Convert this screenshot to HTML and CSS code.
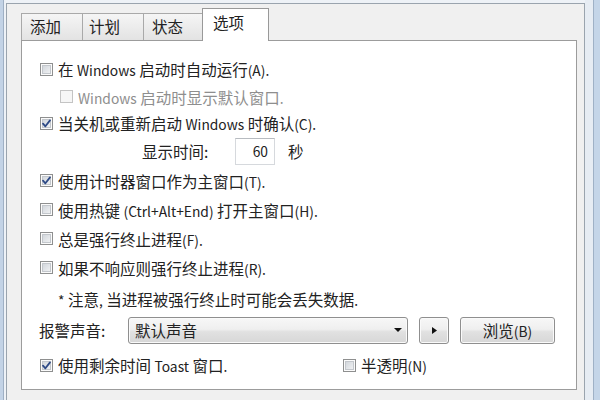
FILE: index.html
```html
<!DOCTYPE html>
<html lang="zh-CN">
<head>
<meta charset="utf-8">
<title>选项</title>
<link rel="stylesheet" href="styles.css">
</head>
<body>
<div class="screen">
  <div class="frame-left"></div>
  <div class="dialog">
    <div class="tabs">
      <div class="tab tab-1">添加</div>
      <div class="tab tab-2">计划</div>
      <div class="tab tab-3">状态</div>
      <div class="tab tab-active">选项</div>
    </div>
    <div class="panel">
      <div class="row r1"><span class="cb"></span><span>在 <span class="lat">Windows</span> 启动时自动运行<span class="lat">(A).</span></span></div>
      <div class="row r2 sub disabled"><span class="cb cb-disabled"></span><span><span class="lat">Windows</span> 启动时显示默认窗口<span class="lat">.</span></span></div>
      <div class="row r3"><span class="cb"><svg class="tick" viewBox="0 0 11 11"><path d="M2 5.6 L4.4 8.3 L9 2.4"/></svg></span><span>当关机或重新启动 <span class="lat">Windows</span> 时确认<span class="lat">(C).</span></span></div>
      <div class="row r4 time"><span class="time-label">显示时间:</span><span class="textbox lat">60</span><span class="unit">秒</span></div>
      <div class="row r5"><span class="cb"><svg class="tick" viewBox="0 0 11 11"><path d="M2 5.6 L4.4 8.3 L9 2.4"/></svg></span><span>使用计时器窗口作为主窗口<span class="lat">(T).</span></span></div>
      <div class="row r5"><span class="cb"></span><span>使用热键 <span class="lat">(Ctrl+Alt+End)</span> 打开主窗口<span class="lat">(H).</span></span></div>
      <div class="row r5"><span class="cb"></span><span>总是强行终止进程<span class="lat">(F).</span></span></div>
      <div class="row r5"><span class="cb"></span><span>如果不响应则强行终止进程<span class="lat">(R).</span></span></div>
      <div class="row r9 note"><span><span class="lat">*</span> 注意<span class="lat">,</span> 当进程被强行终止时可能会丢失数据<span class="lat">.</span></span></div>
      <div class="row r10">
        <span class="sound-label">报警声音:</span>
        <div class="combo"><span>默认声音</span><svg class="arrow" viewBox="0 0 8 4"><polygon points="0,0 8,0 4,4"/></svg></div>
        <div class="btn play"><svg class="play-icon" viewBox="0 0 5 7"><polygon points="0,0 5,3.5 0,7"/></svg></div>
        <div class="btn browse">浏览<span class="lat">(B)</span></div>
      </div>
      <div class="row r11">
        <div class="check-group"><span class="cb"><svg class="tick" viewBox="0 0 11 11"><path d="M2 5.6 L4.4 8.3 L9 2.4"/></svg></span><span>使用剩余时间 <span class="lat">Toast</span> 窗口<span class="lat">.</span></span></div>
        <div class="check-group"><span class="cb"></span><span>半透明<span class="lat">(N)</span></span></div>
      </div>
    </div>
  </div>
  <div class="frame-right"></div>
</div>
</body>
</html>
```

FILE: styles.css
```css
html, body {
  margin: 0;
  padding: 0;
}
body {
  font-family: "Noto Sans CJK SC", "Noto Sans", sans-serif;
  font-size: 15.5px;
  color: #222;
  background: #eef2f7;
}
.lat {
  font-size: 13.8px;
}
.screen {
  width: 600px;
  height: 400px;
  display: flex;
  overflow: hidden;
  background: #eef2f7;
}
.frame-left {
  width: 6px;
  flex: none;
  background: linear-gradient(to right, #c3d3e6 0, #c3d3e6 3px, #9fb0c4 3px, #9fb0c4 4px, #eef2f7 4px);
}
.frame-right {
  width: 15px;
  flex: none;
  background: linear-gradient(to right, #e6ecf3 0, #e6ecf3 8px, #9fb1c6 8px, #9fb1c6 9px, #c4d5e8 9px);
}
.dialog {
  flex: 1;
  margin-top: 3px;
  height: 397px;
  box-sizing: border-box;
  border: 1px solid #9aa4ae;
  border-bottom: none;
  background: #f0f0f0;
  padding: 4px 7px 0 14px;
  display: flex;
  flex-direction: column;
}
.tabs {
  display: flex;
  align-items: flex-end;
  height: 32px;
  flex: none;
}
.tab {
  box-sizing: border-box;
  height: 27px;
  border: 1px solid #a9a9a9;
  border-bottom: none;
  background: linear-gradient(#f5f5f5, #e3e3e3);
  line-height: 25px;
  color: #222;
}
.tab + .tab {
  margin-left: -1px;
}
.tab-1 { width: 62px; padding-left: 8px; }
.tab-2 { width: 62px; padding-left: 6px; }
.tab-3 { width: 60px; padding-left: 8px; }
.tab-active {
  width: 67px;
  height: 33px;
  margin-bottom: -1px;
  background: #fff;
  position: relative;
  z-index: 1;
  padding: 3px 0 0 10px;
  line-height: 20px;
  border-color: #999;
}
.panel {
  box-sizing: border-box;
  height: 350px;
  flex: none;
  border: 1px solid #9c9c9c;
  background: #fff;
  padding: 14px 0 0 17px;
  display: flex;
  flex-direction: column;
}
.row {
  display: flex;
  align-items: center;
  flex: none;
  white-space: nowrap;
}
.r1 { height: 28px; }
.r2 { height: 27px; }
.r3 { height: 26px; }
.r4 { height: 30px; }
.r5 { height: 29px; }
.r9 { height: 34px; }
.r10 { height: 28px; }
.r11 { height: 42px; }

.cb {
  width: 13px;
  height: 13px;
  box-sizing: border-box;
  flex: none;
  border: 1px solid #8e8f8f;
  margin: 0 5px 0 1px;
  background: linear-gradient(135deg, #cbd0d6, #f7f8f9);
  box-shadow: inset 0 0 0 1px #fbfbfb, inset 0 0 0 2px #c3c7cc;
}
.cb-disabled {
  border-color: #c4c4c4;
  background: #f6f6f6;
  box-shadow: none;
}
.tick {
  display: block;
  width: 11px;
  height: 11px;
  fill: none;
  stroke: #2e4a86;
  stroke-width: 1.8;
  stroke-linecap: round;
  stroke-linejoin: round;
}
.sub {
  padding-left: 20px;
}
.disabled {
  color: #8e8e8e;
}
.time {
  padding-left: 103px;
}
.time-label {
  width: 93px;
}
.textbox {
  box-sizing: border-box;
  width: 40px;
  height: 27px;
  border: 1px solid #d6d9dd;
  border-top-color: #b7bbc0;
  text-align: right;
  padding-right: 6px;
  line-height: 25px;
  background: #fff;
}
.unit {
  margin-left: 13px;
}
.note {
  padding-left: 19px;
}
.sound-label {
  width: 89px;
}
.combo, .btn {
  box-sizing: border-box;
  height: 27px;
  border: 1px solid #8f8f8f;
  border-radius: 3px;
  background: linear-gradient(#f7f7f7 0%, #efefef 45%, #e1e1e1 55%, #d7d7d7 100%);
  box-shadow: inset 0 0 0 1px #fafafa;
}
.combo {
  width: 280px;
  display: flex;
  align-items: center;
  justify-content: space-between;
  padding: 0 5px 0 6px;
}
.arrow {
  width: 8px;
  height: 4px;
  fill: #111;
}
.play {
  width: 30px;
  margin-left: 11px;
  display: flex;
  align-items: center;
  justify-content: center;
}
.play-icon {
  width: 5px;
  height: 7px;
  fill: #111;
}
.browse {
  width: 95px;
  margin-left: 11px;
  text-align: center;
  line-height: 25px;
}
.check-group {
  display: flex;
  align-items: center;
}
.check-group:first-child {
  width: 303px;
}
```
